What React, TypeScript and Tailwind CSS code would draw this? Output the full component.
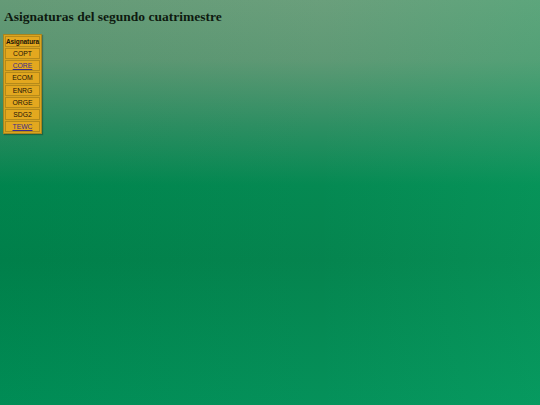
import React from "react";

const rows: { code: string; link?: boolean }[] = [
  { code: "COPT" },
  { code: "CORE", link: true },
  { code: "ECOM" },
  { code: "ENRG" },
  { code: "ORGE" },
  { code: "SDG2" },
  { code: "TEWC", link: true },
];

export default function App() {
  return (
    <div className="relative w-[540px] h-[405px] overflow-hidden bg-[linear-gradient(to_bottom,#679d79_0px,#5b9772_60px,#2a8d60_125px,#00874f_185px,#00824b_260px,#008f57_405px)]">
      <div className="absolute inset-0 bg-[linear-gradient(to_right,rgba(0,0,0,0.02),rgba(255,255,255,0.02)_60%,rgba(40,210,140,0.16))]" />
      <div className="relative px-[4px] pt-[8px]">
        <h3 className="m-0 font-['Liberation_Serif',serif] font-bold text-[13.5px] leading-[17px] text-[#0e1a10]">
          Asignaturas del segundo cuatrimestre
        </h3>
        <div className="mt-[9px] ml-[-1px] inline-block border border-[#a8841c] bg-[#d9a420] shadow-[1px_1px_1px_rgba(0,0,0,0.25)]">
          <table className="border-separate border-spacing-[1px] font-['Liberation_Sans',sans-serif] text-[6.8px] text-[#1a1208]">
            <tbody>
              <tr>
                <th className="w-[35px] h-[11px] border border-[#b58a1a] bg-[#e3a81f] p-0 text-[6.5px] font-bold leading-[8px] tracking-[-0.1px]">
                  Asignatura
                </th>
              </tr>
              {rows.map((r) => (
                <tr key={r.code}>
                  <td className="h-[11.2px] border border-[#b58a1a] bg-[#e3a81f] p-0 text-center leading-[9px]">
                    {r.link ? (
                      <a href="#" className="text-[#3b2a8c] underline">
                        {r.code}
                      </a>
                    ) : (
                      r.code
                    )}
                  </td>
                </tr>
              ))}
            </tbody>
          </table>
        </div>
      </div>
    </div>
  );
}
